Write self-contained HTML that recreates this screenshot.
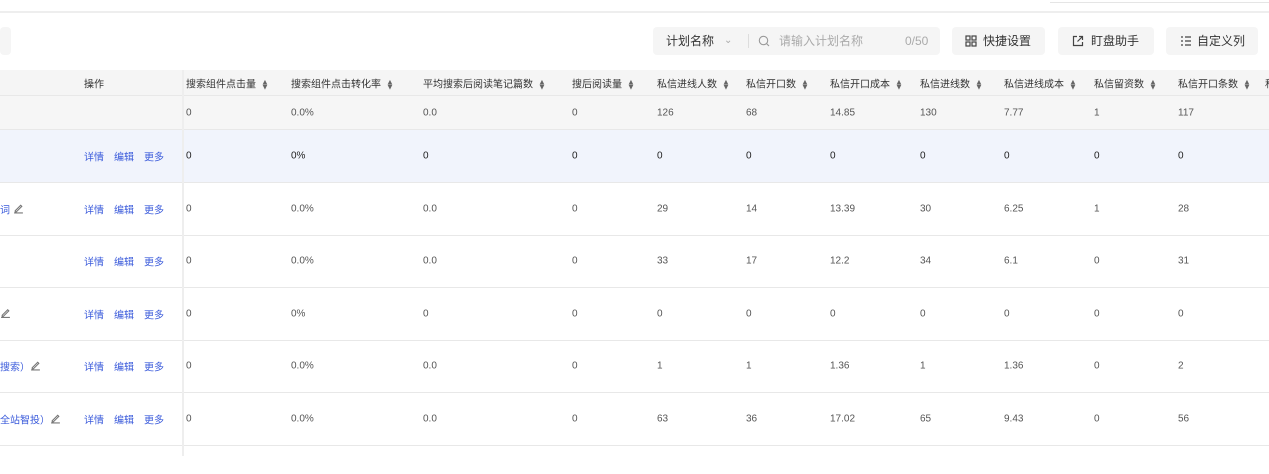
<!DOCTYPE html>
<html><head><meta charset="utf-8"><style>
*{margin:0;padding:0;box-sizing:border-box}
body{width:1269px;height:474px;overflow:hidden;background:#fff;font-family:"Liberation Sans","Noto Sans CJK SC",sans-serif;position:relative;color:#333}
.a{position:absolute;white-space:nowrap}
.btn{position:absolute;top:27px;height:28px;background:#f5f5f5;border-radius:4px;font-size:12px;color:#333;line-height:28px}
.row{position:absolute;left:0;width:1269px;border-bottom:1px solid #e8e8e8}
.c{position:absolute;font-size:10px;color:#555;white-space:nowrap;transform:translateY(-50%)}
.h{font-size:10px;color:#333}
.s{display:inline-block;margin-left:5px;font-size:8px;color:#666;line-height:5px;vertical-align:middle}
.lk{color:#3b5bdb}
.lk b{font-weight:normal;margin-right:10px}
</style></head><body>
<div class="a" style="left:1050px;top:0;width:219px;height:3px;border-bottom:1px solid #e5e5e5"></div>
<div class="a" style="left:0;top:11px;width:1269px;height:2px;background:#eee"></div>
<div class="btn" style="left:0;width:11px"></div>
<div class="btn" style="left:653px;width:287px">
 <span class="a" style="left:13px">计划名称</span><span class="a" style="left:71px;color:#aaa;font-size:10px">⌄</span>
 <span class="a" style="left:95px;top:7px;width:1px;height:14px;background:#ddd"></span>
 <svg class="a" style="left:105px;top:8px" width="12" height="12" viewBox="0 0 12 12"><circle cx="5.5" cy="5.5" r="4.2" fill="none" stroke="#999" stroke-width="1.1"/><path d="M8.5 8.5l2.5 2.5" stroke="#999" stroke-width="1.1"/></svg>
 <span class="a" style="left:126px;color:#aaa">请输入计划名称</span><span class="a" style="left:252px;color:#aaa">0/50</span>
</div>
<div class="btn" style="left:952px;width:93px"><svg class="a" style="left:13px;top:8px" width="12" height="12" viewBox="0 0 12 12" fill="none" stroke="#444" stroke-width="1.2"><rect x="1" y="1" width="4" height="4"/><rect x="7" y="1" width="4" height="4"/><rect x="1" y="7" width="4" height="4"/><rect x="7" y="7" width="4" height="4"/></svg><span class="a" style="left:31px">快捷设置</span></div>
<div class="btn" style="left:1058px;width:96px"><svg class="a" style="left:14px;top:8px" width="12" height="12" viewBox="0 0 12 12" fill="none" stroke="#444" stroke-width="1.2"><path d="M5 1.5H1.5v9h9V7M7 1.5h3.5V5M10.5 1.5L5.5 6.5"/></svg><span class="a" style="left:33px">盯盘助手</span></div>
<div class="btn" style="left:1166px;width:92px"><svg class="a" style="left:14px;top:8px" width="12" height="12" viewBox="0 0 12 12" fill="none" stroke="#444" stroke-width="1.2"><path d="M1 2h2M1 6h2M1 10h2M5 2h6M5 6h6M5 10h6"/></svg><span class="a" style="left:31px">自定义列</span></div>

<div class="row" style="top:70px;height:26px;background:#f5f5f5"></div>
<div class="row" style="top:96px;height:34px;background:#f6f6f6"></div>
<div class="row" style="top:130px;height:53px;background:#f1f4fc"></div>
<div class="row" style="top:183px;height:53px"></div>
<div class="row" style="top:236px;height:52px"></div>
<div class="row" style="top:288px;height:53px"></div>
<div class="row" style="top:341px;height:52px"></div>
<div class="row" style="top:393px;height:53px"></div>
<div class="a" style="left:182px;top:70px;width:2px;height:386px;background:#eee"></div>

<div id="t"></div>
<script>
var xs=[186,291,423,572,657,746,830,920,1004,1094,1178];
var hd=["搜索组件点击量","搜索组件点击转化率","平均搜索后阅读笔记篇数","搜后阅读量","私信进线人数","私信开口数","私信开口成本","私信进线数","私信进线成本","私信留资数","私信开口条数"];
var ys=[113,156,209,261,314,366,419];
var d=[["0","0.0%","0.0","0","126","68","14.85","130","7.77","1","117"],
["0","0%","0","0","0","0","0","0","0","0","0"],
["0","0.0%","0.0","0","29","14","13.39","30","6.25","1","28"],
["0","0.0%","0.0","0","33","17","12.2","34","6.1","0","31"],
["0","0%","0","0","0","0","0","0","0","0","0"],
["0","0.0%","0.0","0","1","1","1.36","1","1.36","0","2"],
["0","0.0%","0.0","0","63","36","17.02","65","9.43","0","56"]];
var h='<div class="c h" style="left:84px;top:83px">操作</div>';
hd.forEach(function(t,i){h+='<div class="c h" style="left:'+xs[i]+'px;top:83px">'+t+'<span class="s">▲<br>▼</span></div>'});
h+='<div class="c h" style="left:1265px;top:83px">私</div>';
ys.forEach(function(y,r){d[r].forEach(function(v,i){h+='<div class="c" style="left:'+xs[i]+'px;top:'+y+'px;'+(r==1?'color:#222':'')+'">'+v+'</div>'});
if(r>0)h+='<div class="c lk" style="left:84px;top:'+y+'px"><b>详情</b><b>编辑</b>更多</div>';});
var pen='<svg width="11" height="11" viewBox="0 0 10 10" fill="none" stroke="#777" stroke-width="1"><path d="M2 7.5L7 2.5l1 1L3 8.5H2zM1 9.5h8"/></svg>';
h+='<div class="c lk" style="left:0;top:209px">词 '+pen+'</div>';
h+='<div class="c" style="left:0;top:314px">'+pen+'</div>';
h+='<div class="c lk" style="left:0;top:366px">搜索）'+pen+'</div>';
h+='<div class="c lk" style="left:0;top:419px">全站智投）'+pen+'</div>';
document.getElementById('t').innerHTML=h;
</script>
</body></html>
